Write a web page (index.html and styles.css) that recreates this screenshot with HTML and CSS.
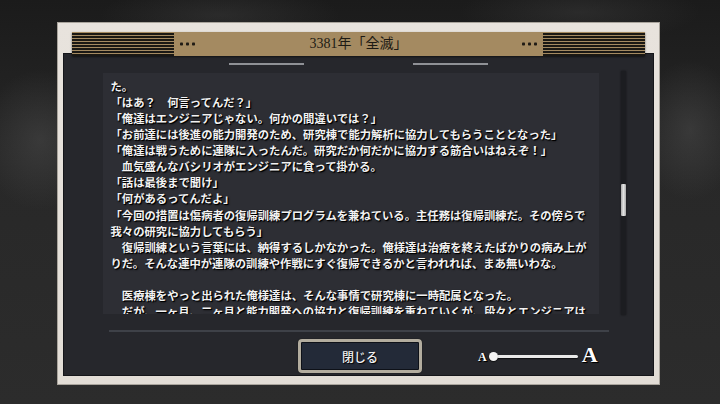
FILE: index.html
```html
<!DOCTYPE html>
<html lang="ja">
<head>
<meta charset="utf-8">
<title>3381年「全滅」</title>
<link rel="stylesheet" href="styles.css">
</head>
<body>
<div class="frame">
  <div class="titlebar">
    <div class="stripes"></div>
    <svg class="dots" width="15" height="4" viewBox="0 0 15 4"><rect x="0" y="0.5" width="3" height="3" rx="0.8"/><rect x="6" y="0.5" width="3" height="3" rx="0.8"/><rect x="12" y="0.5" width="3" height="3" rx="0.8"/></svg>
    <div class="title">3381年「全滅」</div>
    <svg class="dots" width="15" height="4" viewBox="0 0 15 4"><rect x="0" y="0.5" width="3" height="3" rx="0.8"/><rect x="6" y="0.5" width="3" height="3" rx="0.8"/><rect x="12" y="0.5" width="3" height="3" rx="0.8"/></svg>
    <div class="stripes"></div>
  </div>
  <div class="panel">
    <div class="deco"><span class="deco-line"></span><span class="deco-line"></span></div>
    <div class="content">
      <div class="textbox">
        <div class="lines">
          <p>た。</p>
          <p>「はあ？　何言ってんだ？」</p>
          <p>「俺達はエンジニアじゃない。何かの間違いでは？」</p>
          <p>「お前達には後進の能力開発のため、研究棟で能力解析に協力してもらうこととなった」</p>
          <p>「俺達は戦うために連隊に入ったんだ。研究だか何だかに協力する筋合いはねえぞ！」</p>
          <p>　血気盛んなバシリオがエンジニアに食って掛かる。</p>
          <p>「話は最後まで聞け」</p>
          <p>「何があるってんだよ」</p>
          <p>「今回の措置は傷病者の復帰訓練プログラムを兼ねている。主任務は復帰訓練だ。その傍らで</p>
          <p>我々の研究に協力してもらう」</p>
          <p>　復帰訓練という言葉には、納得するしかなかった。俺様達は治療を終えたばかりの病み上が</p>
          <p>りだ。そんな連中が連隊の訓練や作戦にすぐ復帰できるかと言われれば、まあ無いわな。</p>
          <p>&nbsp;</p>
          <p>　医療棟をやっと出られた俺様達は、そんな事情で研究棟に一時配属となった。</p>
          <p>　だが、一ヶ月、二ヶ月と能力開発への協力と復帰訓練を重ねていくが、段々とエンジニアは</p>
        </div>
      </div>
      <div class="scrolltrack"><div class="thumb"></div></div>
    </div>
    <div class="separator"></div>
    <div class="footer">
      <button class="close-btn"><span>閉じる</span></button>
      <div class="fontsize">
        <span class="a-small">A</span>
        <div class="slider"><span class="knob"></span></div>
        <span class="a-big">A</span>
      </div>
    </div>
  </div>
</div>
</body>
</html>
```
FILE: styles.css
```css
html, body {
  margin: 0;
  padding: 0;
}
body {
  width: 720px;
  height: 404px;
  overflow: hidden;
  background:
    radial-gradient(ellipse 60px 70px at 40px 140px, rgba(80,80,80,0.45), transparent),
    radial-gradient(ellipse 50px 70px at 690px 130px, rgba(80,80,80,0.45), transparent),
    radial-gradient(ellipse 120px 30px at 220px 15px, rgba(70,70,70,0.35), transparent),
    radial-gradient(ellipse 120px 30px at 580px 12px, rgba(70,70,70,0.35), transparent),
    linear-gradient(180deg, #1b1b1b 0%, #282828 40%, #2c2c2c 100%);
  font-family: "Noto Sans CJK JP", sans-serif;
}
.frame {
  margin: 22px 0 0 57px;
  width: 603px;
  height: 363px;
  background: linear-gradient(180deg, #e8e3dd, #e2ddd6);
  border: 1px solid #a9a49c;
  box-sizing: border-box;
  padding: 9px 5px 8px 5px;
  display: flex;
  flex-direction: column;
}
.titlebar {
  position: relative;
  z-index: 2;
  margin: 0 9px 0 9px;
  height: 24px;
  background: #a48a61;
  box-shadow: 0 1px 2px rgba(0,0,0,0.55);
  display: flex;
  align-items: center;
  flex: none;
}
.stripes {
  width: 102px;
  height: 24px;
  background: repeating-linear-gradient(180deg, #a48a61 0 1px, #1a1814 1px 3px);
}
.dots {
  fill: #1f1b15;
  margin: 0 6px;
}
.title {
  flex: 1;
  text-align: center;
  font-family: "Liberation Serif", "Noto Sans CJK JP", serif;
  font-size: 14px;
  color: #1d1a14;
  line-height: 24px;
}
.panel {
  margin-top: -3px;
  flex: 1;
  background: #26272c;
  border: 1px solid #15161a;
  display: flex;
  flex-direction: column;
}
.deco {
  display: flex;
  justify-content: center;
  gap: 109px;
  margin-top: 9px;
  height: 2px;
}
.deco-line {
  width: 75px;
  height: 1.5px;
  background: #8f9196;
}
.content {
  display: flex;
  align-items: flex-start;
  margin-top: 8px;
  padding-left: 39px;
}
.textbox {
  width: 496px;
  height: 241px;
  background: #2d2e34;
  overflow: hidden;
  box-sizing: border-box;
  padding: 4.5px 0 0 7.5px;
}
.lines p {
  margin: 0;
  white-space: nowrap;
  font-size: 11.33px;
  line-height: 16.13px;
  font-weight: 700;
  color: #f2f2f2;
  text-shadow: 1px 1px 0 #000, 1px 1px 2px #000;
}
.scrolltrack {
  margin: -2px 0 0 22px;
  width: 5px;
  height: 244px;
  background: #1c1d21;
  box-shadow: 0 0 2px rgba(0,0,0,0.6);
}
.thumb {
  margin-top: 113px;
  width: 5px;
  height: 32px;
  border-radius: 1px;
  background: linear-gradient(90deg, #a9a9a9, #e2e2e2 50%, #a9a9a9);
}
.separator {
  margin: 15px 44px 0 45px;
  height: 2px;
  background: #3e4148;
}
.footer {
  display: flex;
  align-items: center;
  margin-top: 7px;
  padding-left: 234px;
}
.close-btn {
  width: 124px;
  height: 34px;
  padding: 0;
  border: 3px solid #b3ad9f;
  border-radius: 4px;
  background: #232a38;
  box-shadow: inset 0 0 0 1px #0e1118, 0 0 1px #000;
  color: #f0f0f0;
  font-family: "Noto Sans CJK JP", sans-serif;
  font-size: 12px;
  font-weight: 500;
  text-shadow: 1px 1px 1px #000;
  cursor: pointer;
}
.fontsize {
  display: flex;
  align-items: center;
  margin-left: 56px;
  height: 34px;
}
.a-small, .a-big {
  font-family: "Liberation Serif", serif;
  font-weight: 700;
  color: #ffffff;
  text-shadow: 1px 1px 0 #000, 1px 1px 1px #000;
}
.a-small {
  font-size: 12px;
  margin-top: 2px;
}
.a-big {
  font-size: 22px;
  margin-left: 4px;
  margin-top: -2px;
}
.slider {
  position: relative;
  width: 88px;
  height: 3px;
  margin-left: 3px;
  border-radius: 2px;
  background: #e9e9e9;
  box-shadow: 0 1px 1px rgba(0,0,0,0.6);
}
.knob {
  position: absolute;
  left: -1px;
  top: -3px;
  width: 9px;
  height: 9px;
  border-radius: 50%;
  background: #f4f4f4;
  box-shadow: 0 1px 1px rgba(0,0,0,0.6);
}
```
